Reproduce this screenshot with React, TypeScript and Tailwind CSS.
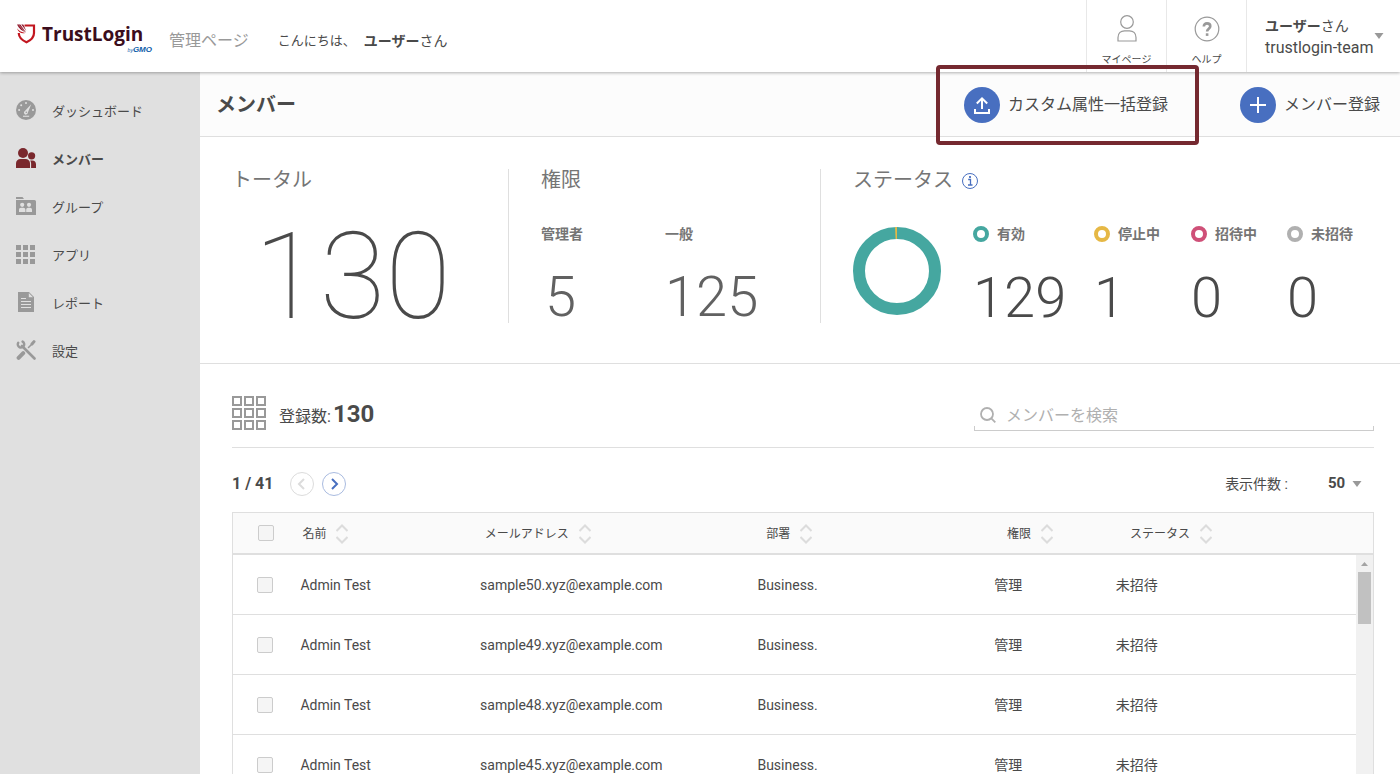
import React, { useState } from 'react';

const navItems = [
  { id: 'dashboard', label: 'ダッシュボード' },
  { id: 'members', label: 'メンバー' },
  { id: 'groups', label: 'グループ' },
  { id: 'apps', label: 'アプリ' },
  { id: 'reports', label: 'レポート' },
  { id: 'settings', label: '設定' },
];

const roles = [
  { label: '管理者', count: 5, pad: 'pl-1' },
  { label: '一般', count: 125, pad: '' },
];

const statuses = [
  { label: '有効', count: 129, ring: 'border-[#45a7a0]', width: 'w-[121px]' },
  { label: '停止中', count: 1, ring: 'border-[#e6b845]', width: 'w-[97px]' },
  { label: '招待中', count: 0, ring: 'border-[#cf5078]', width: 'w-24' },
  { label: '未招待', count: 0, ring: 'border-[#b0b0b0]', width: 'w-20' },
];

const columns = [
  { label: '名前', width: 'w-[16%]' },
  { label: 'メールアドレス', width: 'w-[24.7%]' },
  { label: '部署', width: 'w-[21.1%]' },
  { label: '権限', width: 'w-[10.8%]' },
  { label: 'ステータス', width: '' },
];

const members = [50, 49, 48, 45].map((n) => ({
  name: 'Admin Test',
  email: `sample${n}.xyz@example.com`,
  department: 'Business.',
  role: '管理',
  status: '未招待',
}));

const NavIcon = ({ id }: { id: string }) => {
  switch (id) {
    case 'dashboard':
      return (
        <svg viewBox="0 0 20 20" className="size-5">
          <circle cx="10" cy="10" r="10" fill="#999" />
          <g fill="#e0e0e0">
            <circle cx="3.1" cy="10" r="1" />
            <circle cx="5.2" cy="5.3" r="1" />
            <circle cx="10" cy="3.1" r="1" />
            <circle cx="17" cy="10" r="1" />
            <path d="M15.2 4.2 11.9 12.6a2 2 0 1 1-3-1.700z" />
            <rect x="7" y="15.7" width="6.2" height="1.1" />
          </g>
          <circle cx="10.3" cy="12.2" r="0.8" fill="#999" />
        </svg>
      );
    case 'members':
      return (
        <svg viewBox="0 0 20 20" className="size-5" fill="#7a282d">
          <circle cx="7" cy="5" r="5" />
          <path d="M0 20v-4.500C0 12.500 2 11 4.500 11h5c2.500 0 4.500 1.500 4.500 4.500V20z" />
          <circle cx="15.600" cy="7.800" r="3.600" />
          <path d="M14.200 12.400h2C18.600 12.400 20 14 20 16.200V20h-4.900v-4.600c0-1.100-.3-2.100-.9-3z" />
        </svg>
      );
    case 'groups':
      return (
        <svg viewBox="0 0 20 20" className="size-5">
          <path d="M0 1h6.500L8 3H0zM0 4h18.500a1.500 1.500 0 0 1 1.500 1.500V19H0z" fill="#999" />
          <g fill="#e0e0e0">
            <circle cx="6.200" cy="8.800" r="2.100" />
            <circle cx="13" cy="8.800" r="2.100" />
            <path d="M3 16v-2c0-1.500.8-2.300 2-2.300h2.400c1.200 0 2 .8 2 2.300v2zM10.200 16v-2c0-1.500.8-2.300 2-2.300h1.800c1.200 0 2 .8 2 2.300v2z" />
          </g>
        </svg>
      );
    case 'apps':
      return (
        <svg viewBox="0 0 20 20" className="size-5" fill="#999">
          {[0, 7, 14].map((y) =>
            [0, 7, 14].map((x) => <rect key={`${x}-${y}`} x={x} y={y + 1} width="5" height="5" />)
          )}
        </svg>
      );
    case 'reports':
      return (
        <svg viewBox="0 0 20 20" className="size-5">
          <path d="M2 0h11l5 5v15H2z" fill="#999" />
          <path d="M12.800 1v4.300H17z" fill="#e0e0e0" />
          <path d="M5 6.500h5M5 9.500h10M5 12.500h10M5 15.500h10" stroke="#e0e0e0" />
        </svg>
      );
    default:
      return (
        <svg viewBox="0 0 20 20" className="size-5" fill="none" stroke="#999" strokeLinecap="round">
          <path d="M6 6l12.500 12.500" strokeWidth="2.600" />
          <path d="M2.200 2.800A3.200 3.200 0 1 0 6.600 1.600" strokeWidth="2.400" />
          <path d="M12.500 7.500 15.500 4.500" strokeWidth="1.600" />
          <path d="M16 4l2-2.400" strokeWidth="3" />
          <path d="M2.600 17.800 7.200 13.200" strokeWidth="4" />
        </svg>
      );
  }
};

const Logo = () => (
  <a href="#" className="relative flex w-34 items-center gap-1.5 pb-1 text-[#3b0d1c]">
    <svg viewBox="0 0 20 20" className="size-5">
      <path
        d="M8.500 1.500H18V9c0 4.200-3 7.200-7.500 9.200C6 16.200 3 13.500 2.800 9.500V9"
        fill="none"
        stroke="#c2161f"
        strokeWidth="2.200"
      />
      <path d="M1 .5h3.400l5.600 8C6.400 7 3.200 5 1 .5z" fill="#8d1226" />
      <path d="M1 4.200C2.800 7 6 8.300 9.200 8.900 5.500 9.800 2.400 8.500 1 4.200z" fill="#c2161f" />
      <path d="M5.300.5h2l3 6.500z" fill="#8d1226" />
      <path d="M3 1.200 9 8" stroke="#fff" strokeWidth=".4" />
    </svg>
    <span className="font-['Open_Sans',sans-serif] text-[19px]/5 font-bold">TrustLogin</span>
    <span className="absolute right-0 -bottom-1.5 font-['Liberation_Sans',sans-serif] text-[8px]/2 font-bold italic text-[#0a5ca8]">
      <span className="text-[5px] font-normal">by</span>GMO
    </span>
  </a>
);

const Caret = () => (
  <svg viewBox="0 0 10 6" className="h-1.5 w-2.5 shrink-0" fill="#999">
    <path d="M.5 0h9L5 6z" />
  </svg>
);

const SortIcon = () => (
  <svg viewBox="0 0 12 20" className="h-5 w-3" fill="none" stroke="#dcdcdc" strokeWidth="2">
    <path d="M.5 7 6 1.500 11.500 7M.5 13 6 18.500 11.500 13" />
  </svg>
);

const Checkbox = ({ label }: { label: string }) => (
  <input
    type="checkbox"
    aria-label={label}
    className="block size-4 appearance-none rounded-xs border border-[#ccc] bg-[#f5f5f5] checked:bg-[#486fc0]"
  />
);

const Header = () => (
  <header className="relative z-10 flex h-18 shrink-0 items-stretch justify-between bg-white shadow-[0_1px_3px_rgba(0,0,0,0.3)]">
    <div className="flex items-center pl-4">
      <Logo />
      <span className="ml-[17px] pt-2.5 text-base text-[#999]">管理ページ</span>
      <p className="ml-[29px] flex items-center gap-2 pt-2.5 text-[13px]">
        こんにちは、
        <span className="text-sm"><b>ユーザー</b>さん</span>
      </p>
    </div>
    <div className="flex">
      <a href="#" className="flex w-20 flex-col items-center gap-2.5 border-l border-[#e8e8e8] pt-[15px] text-[10px]">
        <svg viewBox="0 0 20 27" className="h-[27px] w-5" fill="none" stroke="#999" strokeWidth="1.200">
          <circle cx="10" cy="7" r="6.300" />
          <path d="M1 26v-3.500C1 18 4 15.800 7.500 15.800h5c3.500 0 6.500 2.200 6.500 6.700V26z" />
        </svg>
        マイページ
      </a>
      <a href="#" className="flex w-20 flex-col items-center gap-2.5 border-l border-[#e8e8e8] pt-[15px] text-[10px]">
        <svg viewBox="0 0 26 27" className="h-[27px] w-[26px]" fill="none" stroke="#999">
          <circle cx="13" cy="14" r="11.800" strokeWidth="1.200" />
          <path d="M9.800 11.500c0-2 1.300-3.100 3.200-3.100s3.300 1.100 3.300 2.900c0 2.400-3.200 2.400-3.200 5.200" strokeWidth="2.600" />
          <path d="M13.100 18.300v2.600" strokeWidth="2.600" />
        </svg>
        ヘルプ
      </a>
      <button className="flex w-[154px] items-center justify-between border-l border-[#e8e8e8] pr-4 pl-[18px] text-left">
        <span className="flex flex-col pt-0.5">
          <span className="text-sm/[22px]"><b>ユーザー</b>さん</span>
          <span className="text-base/[22px]">trustlogin-team</span>
        </span>
        <Caret />
      </button>
    </div>
  </header>
);

const Sidebar = () => (
  <nav className="w-50 shrink-0 bg-[#e0e0e0] pt-3.5">
    {navItems.map((item) => (
      <a
        key={item.id}
        href="#"
        className={`flex h-12 items-center gap-4 pl-4 text-[13px] ${item.id === 'members' ? 'font-bold' : ''}`}
      >
        <NavIcon id={item.id} />
        <span className="pt-1">{item.label}</span>
      </a>
    ))}
  </nav>
);

const Stats = () => (
  <section className="flex border-b border-[#dfdfdf] px-8 pt-8 pb-10 text-[#757575]">
    <div className="w-[277px] border-r border-[#dfdfdf]">
      <h2 className="text-xl/[22px]">トータル</h2>
      <p className="pt-10 pl-[22px] text-[120px]/[92px] font-thin text-[#4a4a4a]">130</p>
    </div>
    <div className="w-78 border-r border-[#dfdfdf] pl-8">
      <h2 className="text-xl/[22px]">権限</h2>
      <dl className="flex pt-[33px]">
        {roles.map((role) => (
          <div key={role.label} className="w-31">
            <dt className="text-sm/5 font-bold">{role.label}</dt>
            <dd className={`pt-[29px] text-[56px]/12 font-light text-[#616161] ${role.pad}`}>{role.count}</dd>
          </div>
        ))}
      </dl>
    </div>
    <div className="pl-8">
      <h2 className="flex items-center gap-2 text-xl/[22px]">
        ステータス
        <svg viewBox="0 0 18 18" className="size-[18px]" fill="none" stroke="#486fc0">
          <circle cx="9" cy="10" r="7.500" />
          <path d="M7.200 8.500H9.500V13.800M7 14h4.500" strokeWidth="1.300" />
          <path d="M9 5v2" strokeWidth="1.800" />
        </svg>
      </h2>
      <div className="flex gap-8 pt-[33px]">
        <svg viewBox="0 0 88 88" className="mt-[3px] size-22" fill="none" strokeWidth="12">
          <circle cx="44" cy="44" r="38" stroke="#45a7a0" />
          <path d="M42.300 6.040A38 38 0 0 1 44 6" stroke="#e6b845" />
        </svg>
        <dl className="flex">
          {statuses.map((status) => (
            <div key={status.label} className={status.width}>
              <dt className="flex items-center gap-2 text-sm/5 font-bold whitespace-nowrap">
                <span className={`size-4 rounded-full border-4 ${status.ring}`} />
                {status.label}
              </dt>
              <dd className="pt-[30px] text-[56px]/12 font-light text-[#4a4a4a]">{status.count}</dd>
            </div>
          ))}
        </dl>
      </div>
    </div>
  </section>
);

const MemberTable = () => (
  <div className="relative mt-4 border border-[#dfdfdf]">
    <table className="block w-full text-left text-sm">
      <thead className="block border-b-2 border-[#dfdfdf] bg-[#fafafa] text-xs">
        <tr className="table h-10 w-full table-fixed">
          <th className="w-[6%] pl-[25px]"><Checkbox label="すべて選択" /></th>
          {columns.map((col) => (
            <th key={col.label} className={`pt-0.5 pl-px font-normal ${col.width}`}>
              <button className="flex items-center gap-2.5">
                {col.label}
                <SortIcon />
              </button>
            </th>
          ))}
        </tr>
      </thead>
      <tbody className="block pr-[17px]">
        {members.map((m) => (
          <tr key={m.email} className="table h-15 w-full table-fixed border-b border-[#dfdfdf]">
            <td className="w-[6%] pl-6"><Checkbox label={m.email} /></td>
            <td className={columns[0].width}>{m.name}</td>
            <td className={columns[1].width}>{m.email}</td>
            <td className={columns[2].width}>{m.department}</td>
            <td className={columns[3].width}>{m.role}</td>
            <td>{m.status}</td>
          </tr>
        ))}
      </tbody>
    </table>
    {/* scrollbar */}
    <div className="absolute top-[42px] right-0 bottom-0 flex w-[17px] flex-col items-center bg-[#f1f1f1]">
      <svg viewBox="0 0 17 17" className="size-[17px]" fill="#a3a3a3">
        <path d="M5 11h7L8.500 7z" />
      </svg>
      <div className="h-13 w-[13px] bg-[#c1c1c1]" />
    </div>
  </div>
);

const MemberList = () => {
  const [keyword, setKeyword] = useState('');
  const [perPage, setPerPage] = useState('50');

  return (
    <section className="pt-7 pr-[26px] pl-8">
      <div className="flex h-14 items-start justify-between border-b border-[#dfdfdf]">
        <div className="flex items-center gap-[13px] pt-1">
          <button aria-label="グリッド表示">
            <svg viewBox="0 0 34 34" className="size-[34px]" fill="none" stroke="#999" strokeWidth="2">
              {[1, 13, 25].map((y) =>
                [1, 13, 25].map((x) => <rect key={`${x}-${y}`} x={x} y={y} width="8" height="8" />)
              )}
            </svg>
          </button>
          <p className="flex items-baseline gap-0.5 pt-0.5">
            登録数:<b className="text-2xl">130</b>
          </p>
        </div>
        <label className="relative mt-2 flex h-[31px] w-100 items-center gap-2.5 border-b border-[#ccc] pl-1.5">
          <span className="absolute bottom-0 left-0 h-1 w-full border-x border-[#ccc]" />
          <svg viewBox="0 0 16 16" className="size-4" fill="none" stroke="#b0b0b0" strokeWidth="1.800">
            <circle cx="7" cy="7" r="6" />
            <path d="M11.300 11.300 15.300 15.300" />
          </svg>
          <input
            type="text"
            aria-label="メンバーを検索"
            placeholder="メンバーを検索"
            value={keyword}
            onChange={(e) => setKeyword(e.target.value)}
            className="relative min-w-0 flex-1 bg-transparent pt-px outline-none placeholder:text-[#b0b0b0]"
          />
        </label>
      </div>

      <div className="flex items-center justify-between pt-6">
        <div className="flex items-center gap-2">
          <span className="mr-[9px] text-base/6 font-bold">1 / 41</span>
          <button aria-label="前へ" className="flex size-6 items-center justify-center rounded-full border border-[#dcdcdc]">
            <svg viewBox="0 0 12 12" className="size-3" fill="none" stroke="#dcdcdc" strokeWidth="2">
              <path d="M8 1 3 6l5 5" />
            </svg>
          </button>
          <button aria-label="次へ" className="flex size-6 items-center justify-center rounded-full border border-[#a9bbe0]">
            <svg viewBox="0 0 12 12" className="size-3" fill="none" stroke="#486fc0" strokeWidth="2">
              <path d="M4 1l5 5-5 5" />
            </svg>
          </button>
        </div>
        <div className="flex items-center pr-3 text-sm">
          <label htmlFor="per-page">表示件数 :</label>
          <select
            id="per-page"
            value={perPage}
            onChange={(e) => setPerPage(e.target.value)}
            className="ml-10 appearance-none pr-1.5 text-[15px] font-bold"
          >
            <option>20</option>
            <option>50</option>
          </select>
          <Caret />
        </div>
      </div>

      <MemberTable />
    </section>
  );
};

const App: React.FC = () => (
  <div
    lang="ja"
    className="flex h-screen flex-col overflow-hidden bg-white font-['Roboto','Noto_Sans_CJK_JP',sans-serif] text-[#4a4a4a]"
  >
    <Header />
    <div className="flex min-h-0 flex-1">
      <Sidebar />
      <main className="min-w-0 flex-1">
        <div className="flex h-[65px] items-center justify-between border-b border-[#dfdfdf] bg-[#fcfcfc] pt-0.5 pr-5 pl-4">
          <h1 className="text-xl font-bold">メンバー</h1>
          <div className="flex gap-18">
            <button className="relative flex items-center gap-2">
              <span className="absolute -inset-y-[22px] -right-[31px] -left-7 z-20 rounded-sm border-4 border-[#752930]" />
              <svg viewBox="0 0 36 36" className="size-9" fill="none" stroke="#fff" strokeWidth="2">
                <circle cx="18" cy="18" r="18" fill="#486fc0" stroke="none" />
                <path d="M18 22V11.500M12.800 16.500 18 11.300l5.200 5.200M11 22v4h14v-4" />
              </svg>
              カスタム属性一括登録
            </button>
            <button className="flex items-center gap-2">
              <svg viewBox="0 0 36 36" className="size-9" fill="none" stroke="#fff" strokeWidth="2">
                <circle cx="18" cy="18" r="18" fill="#486fc0" stroke="none" />
                <path d="M18 10v16M10 18h16" />
              </svg>
              メンバー登録
            </button>
          </div>
        </div>
        <Stats />
        <MemberList />
      </main>
    </div>
  </div>
);

export default App;
